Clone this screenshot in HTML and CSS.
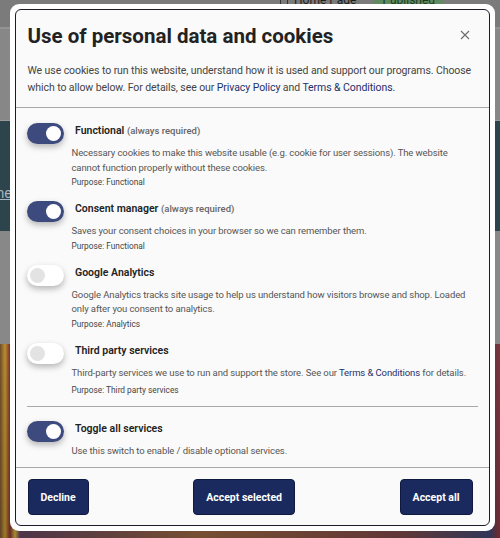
FILE: index.html
```html
<!DOCTYPE html>
<html lang="en">
<head>
<meta charset="utf-8">
<title>Cookies</title>
<link rel="stylesheet" href="styles.css">
</head>
<body>
<div class="page">
  <div class="topbar">
    <span class="doc-icon"></span>
    <span class="home">Home Page</span>
    <span class="badge">Published</span>
  </div>
  <div class="band"></div>
  <div class="hero">
    <a class="hero-link">Home</a>
    <a class="hero-link">0</a>
  </div>
  <div class="content"></div>
  <div class="picture"></div>
</div>

<div class="modal">
  <div class="dialog">
    <header class="head">
      <div class="title-row">
        <h1 class="title">Use of personal data and cookies</h1>
        <button class="close" aria-label="Close">
          <svg width="10" height="10" viewBox="0 0 10 10"><path d="M1 1L9 9M9 1L1 9" stroke="#6b6b6b" stroke-width="1.1" fill="none"/></svg>
        </button>
      </div>
      <p class="intro">We use cookies to run this website, understand how it is used and support our programs. Choose which to allow below. For details, see our <a class="link">Privacy Policy</a> and <a class="link">Terms &amp; Conditions</a>.</p>
    </header>

    <div class="body">
      <div class="item">
        <div class="item-row">
          <span class="switch on"><span class="knob"></span></span>
          <span class="item-title">Functional <span class="req">(always required)</span></span>
        </div>
        <p class="desc">Necessary cookies to make this website usable (e.g. cookie for user sessions). The website cannot function properly without these cookies.</p>
        <p class="purpose">Purpose: Functional</p>
      </div>

      <div class="item">
        <div class="item-row">
          <span class="switch on"><span class="knob"></span></span>
          <span class="item-title">Consent manager <span class="req">(always required)</span></span>
        </div>
        <p class="desc">Saves your consent choices in your browser so we can remember them.</p>
        <p class="purpose">Purpose: Functional</p>
      </div>

      <div class="item">
        <div class="item-row">
          <span class="switch"><span class="knob"></span></span>
          <span class="item-title">Google Analytics</span>
        </div>
        <p class="desc">Google Analytics tracks site usage to help us understand how visitors browse and shop. Loaded only after you consent to analytics.</p>
        <p class="purpose">Purpose: Analytics</p>
      </div>

      <div class="item">
        <div class="item-row">
          <span class="switch"><span class="knob"></span></span>
          <span class="item-title">Third party services</span>
        </div>
        <p class="desc">Third-party services we use to run and support the store. See our <a class="link">Terms &amp; Conditions</a> for details.</p>
        <p class="purpose loose">Purpose: Third party services</p>
      </div>

      <div class="item all">
        <div class="item-row">
          <span class="switch on"><span class="knob"></span></span>
          <span class="item-title">Toggle all services</span>
        </div>
        <p class="desc">Use this switch to enable / disable optional services.</p>
      </div>
    </div>

    <footer class="foot">
      <button class="btn">Decline</button>
      <button class="btn">Accept selected</button>
      <button class="btn">Accept all</button>
    </footer>
  </div>
</div>
</body>
</html>
```

FILE: styles.css
```css
* { box-sizing: border-box; }
html, body { margin: 0; padding: 0; }
body {
  width: 500px;
  height: 538px;
  overflow: hidden;
  font-family: Roboto, "Liberation Sans", sans-serif;
  background: #858585;
}

/* dimmed page behind the dialog */
.page { display: flex; flex-direction: column; height: 538px; }
.topbar {
  height: 29px;
  background: #7b7b7b;
  border-bottom: 2px solid #939393;
  display: flex;
  align-items: flex-start;
  gap: 6px;
  padding-left: 280px;
  font-size: 12px;
  color: #1e1e1e;
}
.doc-icon { width: 8px; height: 8px; margin-top: -2px; border: 1px solid #333; border-radius: 1px; }
.home { margin-top: -7px; }
.badge { margin-top: -7px; margin-left: 12px; background: #5f8a62; color: #1c3a1e; padding: 0 8px; border-radius: 2px; }
.band { height: 92px; background: #878787; border-bottom: 1px solid #9a9a9a; }
.hero {
  height: 110px;
  background: #2d444d;
  display: flex;
  flex-direction: column;
  padding-top: 64px;
  gap: 2px;
  font-size: 14px;
  color: #a8b6bf;
  margin-left: -26px;
}
.hero-link { text-decoration: underline; }
.content { height: 113px; background: #888888; }
.picture {
  flex: 1;
  background:
    linear-gradient(180deg, rgba(0,0,0,0) 0%, rgba(0,0,0,0.15) 100%),
    linear-gradient(90deg, #6e4a2c 0%, #b8902e 1%, #7a2e2a 2%, #c4a23a 3%, #5a3d55 4%, #8a5b3a 40%, #704040 80%, #3a3f66 98%, #8a3030 100%);
}

/* dialog overlay */
.modal {
  position: absolute;
  left: 10px;
  top: 4px;
  width: 485px;
  height: 527px;
  padding: 5px;
  background: #ffffff;
  border-radius: 9px;
}
.dialog {
  height: 100%;
  border: 1.5px solid #1b1c2a;
  border-radius: 6px;
  background: #fafafa;
  display: flex;
  flex-direction: column;
}

.head {
  padding: 13px 12px 11px 11.5px;
  border-bottom: 1px solid #a9a9a9;
}
.title-row { display: flex; align-items: center; }
.title {
  flex: 1;
  margin: 0;
  font-size: 20.5px;
  line-height: 27px;
  font-weight: 700;
  color: #222222;
}
.close {
  width: 24px;
  height: 24px;
  margin-top: -3px;
  padding: 0;
  border: 0;
  background: transparent;
  display: flex;
  align-items: center;
  justify-content: center;
}
.intro {
  margin: 12px 0 0;
  font-size: 10.5px;
  letter-spacing: -0.08px;
  line-height: 17px;
  color: #444444;
}
.link { color: #25306a; text-decoration: none; }

.body {
  flex: 1;
  padding: 15px 11px 0 11px;
  display: flex;
  flex-direction: column;
}
.item { margin-bottom: 13px; }
.item-row { display: flex; align-items: flex-start; }
.switch {
  width: 37px;
  height: 21px;
  border-radius: 11px;
  background: #ffffff;
  box-shadow: 0 3px 6px rgba(0, 0, 0, 0.28);
  position: relative;
  flex: none;
}
.switch .knob {
  position: absolute;
  top: 3px;
  left: 3px;
  width: 15px;
  height: 15px;
  border-radius: 50%;
  background: #e3e3e3;
}
.switch.on { background: #3c4a7e; }
.switch.on .knob { left: auto; right: 3px; background: #ffffff; }
.item-title {
  margin: 1px 0 0 11px;
  font-size: 10.5px;
  line-height: 14px;
  font-weight: 600;
  color: #222222;
}
.req { font-size: 9.5px; font-weight: 500; color: #666666; }
.desc {
  margin: 2px 0 0 44.5px;
  font-size: 9.5px;
  letter-spacing: -0.1px;
  line-height: 14.5px;
  color: #555555;
}
.purpose {
  margin: 1px 0 0 44.5px;
  font-size: 8.3px;
  line-height: 12px;
  color: #444444;
}
.purpose.loose { margin-top: 3.5px; }
.item.all {
  margin-top: -3px;
  border-top: 1px solid #a9a9a9;
  padding-top: 14px;
  margin-bottom: 0;
}

.foot {
  border-top: 1px solid #a9a9a9;
  padding: 11px 16.5px 10px 11.5px;
  display: flex;
  justify-content: space-between;
}
.btn {
  height: 36px;
  padding: 0 12px;
  border: 1px solid #0f1a40;
  border-radius: 4px;
  background: #1b2a5e;
  color: #ffffff;
  font-family: Roboto, "Liberation Sans", sans-serif;
  font-size: 10.5px;
  font-weight: 700;
}
```
